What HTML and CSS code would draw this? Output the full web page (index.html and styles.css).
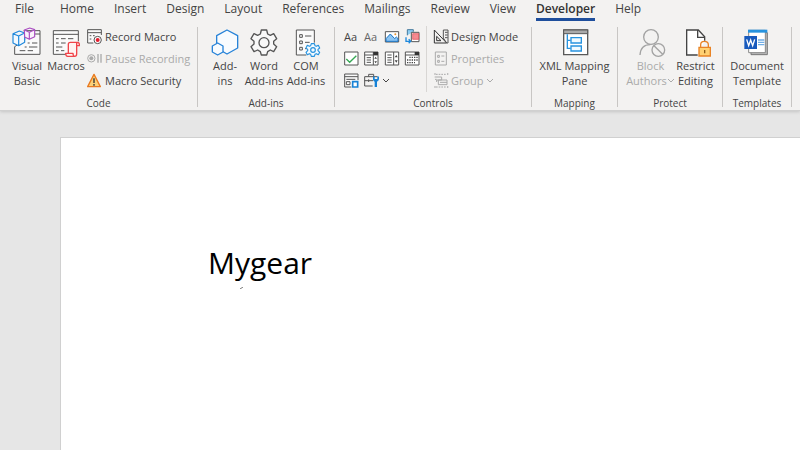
FILE: index.html
```html
<!DOCTYPE html>
<html lang="en">
<head>
<meta charset="utf-8">
<title>Mygear</title>
<link rel="stylesheet" href="styles.css">
</head>
<body>
<header class="ribbon">
  <nav class="tabs" aria-label="Ribbon tabs">
    <a class="tab tab-file" href="#">File</a>
    <a class="tab" href="#">Home</a>
    <a class="tab" href="#">Insert</a>
    <a class="tab" href="#">Design</a>
    <a class="tab" href="#">Layout</a>
    <a class="tab" href="#">References</a>
    <a class="tab" href="#">Mailings</a>
    <a class="tab" href="#">Review</a>
    <a class="tab" href="#">View</a>
    <a class="tab active" href="#" aria-current="page">Developer</a>
    <a class="tab" href="#">Help</a>
  </nav>
  <div class="groups">
    <section class="group">
      <div class="tools">
        <button class="big narrow">
          <svg class="icon-big" viewBox="33 81 90 90" aria-hidden="true">
            <path class="line" fill="#fafafa" d="M68 92H117V163H41V140L71 120V102"/>
            <path class="line" d="M100 102H117M80 129h6M93 129h16M71 141h6M84 141h25M56 152h17M80 152h16"/>
            <g fill="#f3f9fe" stroke="#1e88dc" stroke-width="3.5" stroke-linejoin="round"><path d="M36 101L55 93L71 99V127L53 137L36 129ZM36 101L53 108L71 99M53 108V137"/></g>
            <g fill="#fbf3fd" stroke="#a94fc0" stroke-width="3.5" stroke-linejoin="round"><path d="M70 90L86 84L101 89V110L85 118L71 111ZM70 90L85 97L101 89M85 97V118"/></g>
          </svg>
          <span>Visual<br>Basic</span>
        </button>
        <button class="big">
          <svg class="icon-big" viewBox="150 81 90 90" aria-hidden="true">
            <path fill="#fafafa" class="line" d="M195 163H157V92H232V124M157 103H232"/>
            <path class="line" d="M165 116h8M180 116h14M201 116h16M165 129h8M180 129h14M165 141h19M165 152h8M180 152h10"/>
            <path fill="#fff3f2" stroke="#f0444a" stroke-width="4" stroke-linejoin="round" d="M202 160V133q0-6 6-6H229q7 0 6 10H227V162q0 7-6 7H200q-6 0-6-9H216q0 9 5 9M227 137V127"/>
          </svg>
          <span>Macros</span>
        </button>
        <div class="stack">
          <button class="small">
            <svg class="icon" viewBox="261 87 48 48" aria-hidden="true">
              <path class="line" fill="#fafafa" d="M280 129H263V89H304V105"/><path class="line" d="M263 98H304M269 107h5M279 107h5M269 117h5"/>
              <circle cx="293" cy="120" r="11" fill="#fff" stroke="#555" stroke-width="3"/><circle cx="293" cy="120" r="6" fill="#e51d2e"/>
            </svg>Record Macro</button>
          <button class="small" disabled>
            <svg class="icon" viewBox="261 153 48 48" aria-hidden="true">
              <circle cx="274" cy="175" r="11" stroke="#aaa" stroke-width="3"/><circle cx="274" cy="175" r="6" fill="#aaa"/>
              <path d="M294 162V188M303 162V188" stroke="#aaa" stroke-width="4"/>
            </svg>Pause Recording</button>
          <button class="small">
            <svg class="icon" viewBox="261 219 48 48" aria-hidden="true">
              <path d="M282 223L301 260H263Z" fill="#fbd078" stroke="#e97a20" stroke-width="4" stroke-linejoin="round"/>
              <path d="M282 235V249M282 252V257" stroke="#333" stroke-width="4"/>
            </svg>Macro Security</button>
        </div>
      </div>
      <h2>Code</h2>
    </section>
    <section class="group">
      <div class="tools">
        <button class="big narrow">
          <svg class="icon-big" viewBox="29 81 90 90" aria-hidden="true">
            <g fill="#f8fbfe" stroke="#2783d8" stroke-width="4" stroke-linejoin="round"><path d="M80 90L112 107V144L80 162L49 144V107Z"/><path d="M52 129L68 138V156L52 165L36 156V138Z"/></g>
          </svg>
          <span>Add-<br>ins</span>
        </button>
        <button class="big">
          <svg class="icon-big" viewBox="148 81 90 90" aria-hidden="true">
            <g fill="#f8f8f8" stroke="#555" stroke-width="4" stroke-linejoin="round"><path d="M185 90H201L204 102L212 106L222 101L231 116L222 124V132L231 140L222 155L212 150L204 155L201 165H185L182 155L174 150L163 155L154 140L163 132V124L154 116L163 101L174 106L182 102Z"/><circle cx="193" cy="128" r="15"/></g>
          </svg>
          <span>Word<br>Add-ins</span>
        </button>
        <button class="big">
          <svg class="icon-big" viewBox="274 81 90 90" aria-hidden="true">
            <path class="line" fill="#fafafa" d="M320 165H290V90H344V128"/>
            <path class="line" d="M300 104h8v8h-8zM300 123h8v8h-8zM300 142h8v8h-8zM316 108h19M316 127h14M316 146h5"/>
            <g fill="#f3faff" stroke="#2793df" stroke-width="3.5" stroke-linejoin="round"><path d="M335 131H344L346 137L350 139L356 136L360 144L355 148V152L360 157L356 164L350 161L346 163L344 169H335L333 163L329 161L323 164L319 157L324 152V148L319 144L323 136L329 139L333 137Z"/><circle cx="340" cy="150" r="7"/></g>
          </svg>
          <span>COM<br>Add-ins</span>
        </button>
      </div>
      <h2>Add-ins</h2>
    </section>
    <section class="group">
      <div class="tools">
        <div class="controls">
          <button class="glyph" aria-label="Rich text">Aa</button>
          <button class="glyph light" aria-label="Plain text">Aa</button>
          <button class="tile" aria-label="Picture">
            <svg class="icon" viewBox="150 87 48 48" aria-hidden="true"><path class="line" fill="#fff" d="M154 95H194V126H154Z"/><path d="M156 116L169 102L182 116L187 111L192 116V124H156Z" fill="#8dc5f3" stroke="#1673c5" stroke-width="3"/><circle cx="184" cy="103" r="3" fill="#e6942f"/></svg>
          </button>
          <button class="tile" aria-label="Building block gallery">
            <svg class="icon" viewBox="210 87 48 48" aria-hidden="true"><path d="M220 106V89H238V95" fill="#8dcdf2" stroke="#45799d" stroke-width="3"/><path class="line" d="M232 97H255V125H232Z" fill="#fff"/><path d="M236 101H254V118H236Z" fill="#f48b91" stroke="#df4550" stroke-width="2"/><path d="M216 112V124H229M224 118L230 124L224 130" stroke="#1e88dc" stroke-width="4"/></svg>
          </button>
          <button class="tile" aria-label="Check box">
            <svg class="icon" viewBox="30 153 48 48" aria-hidden="true"><path class="line" fill="#fff" d="M32 156H72V195H32Z"/><path d="M37 177L47 187L67 167" stroke="#35a853" stroke-width="4"/></svg>
          </button>
          <button class="tile" aria-label="Combo box">
            <svg class="icon" viewBox="90 153 48 48" aria-hidden="true"><path class="line" fill="#fff" d="M92 156H132V195H92ZM92 165H132M118 156V195"/><path d="M118 156H132V165H118Z" fill="#333"/><path class="line" d="M98 173h13M98 180h13M98 187h13"/><path d="M121 176L125 170L129 176ZM121 184L125 190L129 184Z" fill="#444"/></svg>
          </button>
          <button class="tile" aria-label="Drop-down list">
            <svg class="icon" viewBox="150 153 48 48" aria-hidden="true"><path class="line" fill="#fff" d="M154 156H194V195H154ZM179 156V195"/><path class="line" d="M160 165h13M160 173h13M160 180h13M160 187h13"/><path d="M182 172L187 165L191 172ZM182 181L187 188L191 181Z" fill="#444"/></svg>
          </button>
          <button class="tile" aria-label="Date picker">
            <svg class="icon" viewBox="210 153 48 48" aria-hidden="true"><path class="line" fill="#fff" d="M214 156H255V195H214ZM214 165H255"/><path d="M242 156H255V165H242Z" fill="#333"/><path d="M226 172H251M219 180H251M219 188H243" stroke="#444" stroke-width="4" stroke-dasharray="4 3"/></svg>
          </button>
          <button class="tile" aria-label="Repeating section">
            <svg class="icon" viewBox="30 219 48 48" aria-hidden="true"><path class="line" fill="#fafafa" d="M52 261H32V222H72V240"/><path class="line" d="M32 230H72M37 238H64M37 245H48V254H37Z"/><path d="M56 245H71V261H56Z" fill="#fff" stroke="#1682d6" stroke-width="5"/></svg>
          </button>
          <button class="tile legacy" aria-label="Legacy tools">
            <svg class="icon" viewBox="90 219 48 48" aria-hidden="true"><path class="line" d="M116 258H92V230H130M92 242H117M104 230V223H119V230M104 238V246"/><path d="M117 230V238Q117 243 122 245V261H129V245Q135 242 135 237V230L130 228V237H122V228Z" fill="#1682d6"/></svg>
            <svg class="chevron" viewBox="0 0 8 8" aria-hidden="true"><path d="M1 2L4 5L7 2"/></svg>
          </button>
        </div>
        <div class="stack divided">
          <button class="small">
            <svg class="icon" viewBox="297 87 48 48" aria-hidden="true"><path d="M301 90V129H338ZM308 109V122H321Z" stroke="#333" stroke-width="3"/><path class="line" d="M328 114V90H342V129H338ZM333 97h8M333 105h8M333 113h8"/></svg>Design Mode</button>
          <button class="small" disabled>
            <svg class="icon" viewBox="297 153 48 48" aria-hidden="true"><g stroke="#aaa" stroke-width="3"><path d="M304 156H337V195H304Z"/><path d="M311 166h5v6h-5zM311 181h5v6h-5zM322 168h9M322 184h9"/></g></svg>Properties</button>
          <button class="small" disabled>
            <svg class="icon" viewBox="297 219 48 48" aria-hidden="true"><g stroke="#aaa" stroke-width="3"><path d="M306 223H337M306 261H337" stroke-dasharray="5 3"/><path d="M301 222h4M339 222h4M301 261h4M339 261h4" stroke-width="4"/><path d="M302 231H323V240H308V246M313 240H339V254H313ZM318 247H339M303 238h5"/></g></svg>Group
            <svg class="chevron" viewBox="0 0 8 8" aria-hidden="true"><path d="M1 2L4 5L7 2"/></svg></button>
        </div>
      </div>
      <h2>Controls</h2>
    </section>
    <section class="group">
      <div class="tools center">
        <button class="big">
          <svg class="icon-big" viewBox="87 81 90 90" aria-hidden="true">
            <path d="M98 90H170V164H98Z" fill="#fff" stroke="#595959" stroke-width="4"/><path d="M98 90H170V101H98Z" fill="#aaa" stroke="#595959" stroke-width="3"/>
            <path d="M109 103V145H119M109 121H119" stroke="#2793df" stroke-width="4"/><path d="M120 113H151V129H120ZM120 138H151V153H120Z" fill="#f1faff" stroke="#2793df" stroke-width="4"/>
          </svg>
          <span>XML Mapping<br>Pane</span>
        </button>
      </div>
      <h2>Mapping</h2>
    </section>
    <section class="group">
      <div class="tools center spaced">
        <button class="big" disabled>
          <svg class="icon-big" viewBox="318 81 90 90" aria-hidden="true">
            <g stroke="#a3a3a3" stroke-width="4"><circle cx="363" cy="111" r="22"/><path d="M330 165Q332 134 361 134"/><circle cx="385" cy="150" r="19" fill="#f3f2f1"/><path d="M372 137L398 163"/></g>
          </svg>
          <span>Block<br>Authors<svg class="chevron" viewBox="0 0 8 8" aria-hidden="true"><path d="M1 2L4 5L7 2"/></svg></span>
        </button>
        <button class="big">
          <svg class="icon-big" viewBox="63 81 90 90" aria-hidden="true">
            <path d="M113 165H80V90H115L134 110V122" fill="#fff" stroke="#444" stroke-width="4"/><path d="M113 90V112H134" stroke="#444" stroke-width="4"/>
            <path d="M122 143V134Q122 124 133 124Q145 124 145 134V143" stroke="#e98325" stroke-width="4"/><path d="M117 142H151V168H117Z" fill="#ffd071" stroke="#e98325" stroke-width="4"/><path d="M134 150V160" stroke="#8b5b16" stroke-width="4"/>
          </svg>
          <span>Restrict<br>Editing</span>
        </button>
      </div>
      <h2>Protect</h2>
    </section>
    <section class="group">
      <div class="tools center">
        <button class="big">
          <svg class="icon-big" viewBox="246 81 90 90" aria-hidden="true">
            <path d="M273 98H322V164H273Z" fill="#bbb" stroke="#777" stroke-width="3"/><path d="M266 91H316V158H266Z" fill="#fff" stroke="#888" stroke-width="3"/>
            <path d="M264 89H322V98H264Z" fill="#2793df"/><path d="M294 120h19M294 127h19M294 134h19" stroke="#72aee6" stroke-width="4"/>
            <path d="M253 108H291V147H253Z" fill="#185abd"/><path d="M260 118L266 137L272 120L278 137L284 118" stroke="#fff" stroke-width="4"/>
          </svg>
          <span>Document<br>Template</span>
        </button>
      </div>
      <h2>Templates</h2>
    </section>
  </div>
</header>
<main class="canvas">
  <article class="page">
    <p>Mygear</p>
    <svg class="speck" viewBox="0 0 4 2" aria-hidden="true"><path d="M0 2L3 0"/></svg>
  </article>
</main>
</body>
</html>
```
FILE: styles.css
```css
* { box-sizing: border-box; }

body {
  margin: 0;
  min-height: 100vh;
  display: flex;
  flex-direction: column;
  background: #e6e6e6;
  color: #444;
  font-family: "Open Sans", "Noto Sans", sans-serif;
  font-size: 11px;
}

svg { fill: none; }

.ribbon {
  background: #f3f2f1;
  border-bottom: 1px solid #d0d0d0;
  box-shadow: 0 1px 3px #c4c4c4;
}

.tabs {
  display: flex;
  gap: 20px;
  padding-left: 15px;
  height: 22px;
}

.tab {
  height: 21px;
  line-height: 18px;
  font-size: 12px;
  color: #444;
  text-decoration: none;
}

.tab-file { margin-right: 6px; }

.tab.active {
  font-weight: 600;
  color: #333;
  border-bottom: 3px solid #1e4e9c;
}

.groups {
  display: grid;
  grid-template-columns: 198px 137px 197px 86px 105px 69px;
  padding: 5px 0 3px;
}

.group {
  border-right: 1px solid #c8c6c4;
  height: 80px;
  display: flex;
  flex-direction: column;
  justify-content: space-between;
}

.group h2 {
  margin: 0;
  font-size: 10px;
  font-weight: 400;
  line-height: 8px;
  text-align: center;
}

.tools {
  display: flex;
  padding-left: 9px;
}

.tools.center {
  justify-content: center;
  padding: 0;
}

.tools.spaced {
  gap: 3px;
  padding-left: 6px;
}

button {
  font: inherit;
  color: inherit;
  background: none;
  border: 0;
  padding: 0;
}

button:disabled { color: #aaa; }

.big {
  width: 42px;
  display: flex;
  flex-direction: column;
  align-items: center;
  gap: 1px;
  line-height: 15px;
  white-space: nowrap;
}

.big.narrow { width: 36px; }

.icon-big { width: 30px; height: 30px; flex: none; }

.icon { width: 16px; height: 16px; flex: none; }

.line { stroke: #555; stroke-width: 3; }

.chevron {
  width: 8px;
  height: 8px;
  stroke: currentColor;
}

.stack {
  display: grid;
  grid-auto-rows: 22px;
  align-content: start;
}

.small {
  display: flex;
  align-items: center;
  gap: 2px;
  line-height: 14px;
  white-space: nowrap;
}

.divided {
  margin-left: 6px;
  padding-left: 6px;
  border-left: 1px solid #d8d6d4;
}

.stack, .controls { margin-top: -1px; }

.controls {
  display: grid;
  grid-template-columns: repeat(4, 16px);
  grid-auto-rows: 22px;
  column-gap: 4px;
  align-content: start;
}

.tile, .glyph {
  display: flex;
  align-items: center;
}

.glyph { line-height: 14px; }

.light { color: #666; }

.legacy { grid-column: span 2; gap: 2px; }

.canvas {
  flex: 1;
  display: flex;
  padding: 26px 0 0 60px;
}

.page {
  flex: 1;
  background: #fff;
  border: solid #d0d0d0;
  border-width: 1px 0 0 1px;
  padding: 105px 147px;
}

.page p {
  margin: 0;
  color: #000;
  font-size: 30px;
  line-height: 40px;
}

.speck {
  display: block;
  width: 4px;
  height: 2px;
  margin: 4px 0 0 32px;
  stroke: #777;
}
```
